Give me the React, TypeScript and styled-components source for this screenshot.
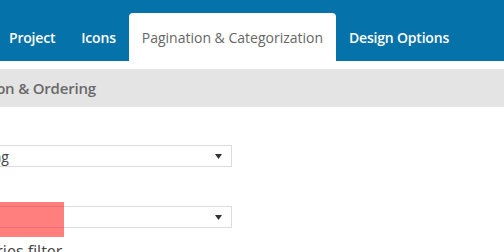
import React from "react";
import styled, { createGlobalStyle } from "styled-components";

const GlobalStyle = createGlobalStyle`
  html, body {
    margin: 0;
    padding: 0;
    background: #fff;
    font-family: "Open Sans", "Liberation Sans", sans-serif;
    overflow: hidden;
  }
`;

// the screenshot shows the page scrolled a little to the right
const OFFSET = 72;
const FORM_PAD = 7;

const Page = styled.div`
  width: 504px;
  height: 252px;
  overflow: hidden;
`;

const TabBar = styled.div`
  height: 61px;
  background: #0572a9;
  display: flex;
  align-items: flex-end;
`;

const TabList = styled.div`
  display: flex;
  align-items: flex-end;
  margin-left: -4px;
`;

const Tab = styled.div<{ $active?: boolean }>`
  height: 48px;
  display: flex;
  align-items: center;
  padding: 0 13px;
  font-size: 14px;
  font-weight: ${(p) => (p.$active ? 400 : 600)};
  letter-spacing: ${(p) => (p.$active ? "0" : "-0.2px")};
  color: ${(p) => (p.$active ? "#666" : "#fff")};
  background: ${(p) => (p.$active ? "#fff" : "transparent")};
  border-radius: 4px 4px 0 0;
  white-space: nowrap;
`;

const Content = styled.div`
  margin-left: -${OFFSET}px;
  padding-top: 8px;
`;

const SectionTitle = styled.div`
  height: 38px;
  background: #e4e4e4;
  display: flex;
  align-items: center;
  padding-left: 11px;
  font-size: 15px;
  font-weight: 600;
  letter-spacing: -0.2px;
  color: #696969;
  white-space: nowrap;
`;

const Form = styled.div`
  padding-left: ${FORM_PAD}px;
  display: flex;
  flex-direction: column;
`;

const Field = styled.div<{ $gap: number }>`
  position: relative;
  padding-top: ${(p) => p.$gap}px;
`;

const SelectBox = styled.div`
  box-sizing: border-box;
  width: ${232 + OFFSET - FORM_PAD}px;
  height: 22px;
  border: 1px solid #dcdcdc;
  background: #fff;
  display: flex;
  align-items: center;
  justify-content: space-between;
  padding: 0 6px;
  font-size: 14px;
  color: #444;
  white-space: nowrap;
`;

const Arrow = styled.svg`
  width: 7px;
  height: 5px;
  margin-right: 3px;
  fill: #333;
`;

const Redaction = styled.div`
  position: absolute;
  left: 0;
  bottom: -9px;
  width: ${64 + OFFSET - FORM_PAD}px;
  height: 35px;
  background: rgba(255, 0, 0, 0.5);
`;

const CheckLabel = styled.div`
  padding-top: 12px;
  margin-left: -33px;
  font-size: 16px;
  line-height: 22px;
  color: #444;
  white-space: nowrap;
`;

const Select: React.FC<{ value: string }> = ({ value }) => (
  <SelectBox>
    <span>{value}</span>
    <Arrow viewBox="0 0 7 5">
      <polygon points="0,0 7,0 3.5,5" />
    </Arrow>
  </SelectBox>
);

export default function App() {
  return (
    <Page>
      <GlobalStyle />
      <TabBar>
        <TabList>
          <Tab>Project</Tab>
          <Tab>Icons</Tab>
          <Tab $active>Pagination &amp; Categorization</Tab>
          <Tab>Design Options</Tab>
        </TabList>
      </TabBar>
      <Content>
        <SectionTitle>Pagination &amp; Ordering</SectionTitle>
        <Form>
          <Field $gap={38}>
            <Select value="Ascending" />
          </Field>
          <Field $gap={39}>
            <Select value="" />
            <Redaction />
          </Field>
          <CheckLabel>Show categories filter</CheckLabel>
        </Form>
      </Content>
    </Page>
  );
}
